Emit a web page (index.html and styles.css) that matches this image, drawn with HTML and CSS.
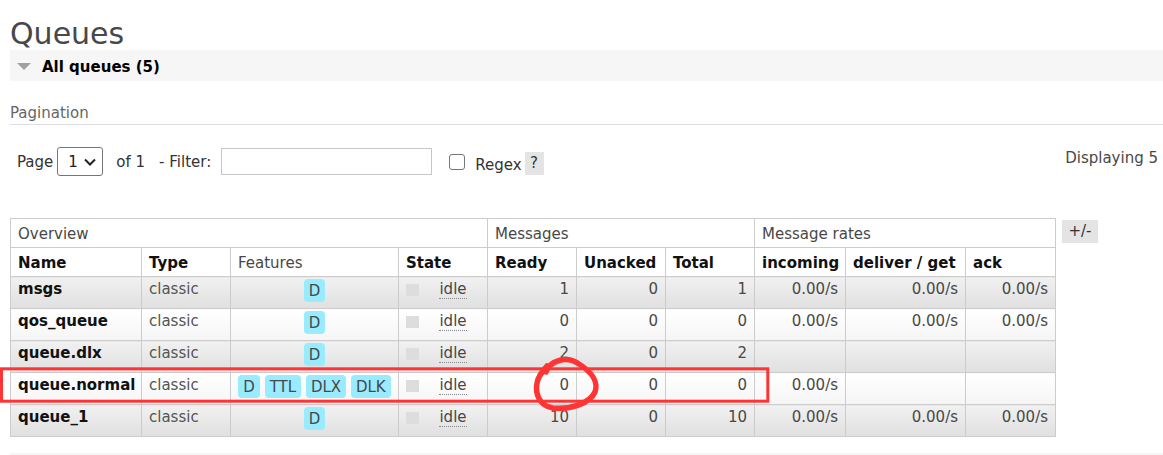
FILE: index.html
```html
<!DOCTYPE html>
<html>
<head>
<meta charset="utf-8">
<title>Queues</title>
<link rel="stylesheet" href="styles.css">
</head>
<body>
<h1 class="title">Queues</h1>
<div class="section-head"><span class="tri"></span><span class="section-title">All queues (5)</span></div>
<div class="pagination-label">Pagination</div>
<div class="pager">
  <span class="lbl lbl-page">Page</span>
  <div class="select"><span class="select-val">1</span><svg class="chev" width="12" height="8" viewBox="0 0 12 8"><path d="M1 1.5 L6 6.5 L11 1.5" fill="none" stroke="#222" stroke-width="2"/></svg></div>
  <span class="lbl lbl-of">of 1</span>
  <span class="lbl lbl-filter">- Filter:</span>
  <input class="filter" type="text">
  <input class="check" type="checkbox">
  <span class="lbl lbl-regex">Regex</span>
  <span class="help">?</span>
  <div class="displaying">Displaying 5</div>
</div>
<div class="table-wrap">
  <table class="list">
    <colgroup>
      <col class="c-name"><col class="c-type"><col class="c-feat"><col class="c-state">
      <col class="c-num"><col class="c-num"><col class="c-num">
      <col class="c-inc"><col class="c-del"><col class="c-ack">
    </colgroup>
    <thead>
      <tr class="group-row">
        <th colspan="4">Overview</th>
        <th colspan="3">Messages</th>
        <th colspan="3">Message rates</th>
      </tr>
      <tr class="col-row">
        <th>Name</th><th>Type</th><th class="thin">Features</th><th>State</th>
        <th>Ready</th><th>Unacked</th><th>Total</th>
        <th>incoming</th><th>deliver / get</th><th>ack</th>
      </tr>
    </thead>
    <tbody>
      <tr class="alt1">
        <td class="name">msgs</td><td class="type">classic</td>
        <td class="feat"><span class="badge">D</span></td>
        <td><div class="state"><span class="key"></span><span class="st"><span class="idle">idle</span></span></div></td>
        <td class="num">1</td><td class="num">0</td><td class="num">1</td>
        <td class="num">0.00/s</td><td class="num">0.00/s</td><td class="num">0.00/s</td>
      </tr>
      <tr class="alt2">
        <td class="name">qos_queue</td><td class="type">classic</td>
        <td class="feat"><span class="badge">D</span></td>
        <td><div class="state"><span class="key"></span><span class="st"><span class="idle">idle</span></span></div></td>
        <td class="num">0</td><td class="num">0</td><td class="num">0</td>
        <td class="num">0.00/s</td><td class="num">0.00/s</td><td class="num">0.00/s</td>
      </tr>
      <tr class="alt1">
        <td class="name">queue.dlx</td><td class="type">classic</td>
        <td class="feat"><span class="badge">D</span></td>
        <td><div class="state"><span class="key"></span><span class="st"><span class="idle">idle</span></span></div></td>
        <td class="num">2</td><td class="num">0</td><td class="num">2</td>
        <td class="num"></td><td class="num"></td><td class="num"></td>
      </tr>
      <tr class="alt2">
        <td class="name">queue.normal</td><td class="type">classic</td>
        <td class="feat"><span class="badge">D</span> <span class="badge">TTL</span> <span class="badge">DLX</span> <span class="badge">DLK</span></td>
        <td><div class="state"><span class="key"></span><span class="st"><span class="idle">idle</span></span></div></td>
        <td class="num">0</td><td class="num">0</td><td class="num">0</td>
        <td class="num">0.00/s</td><td class="num"></td><td class="num"></td>
      </tr>
      <tr class="alt1">
        <td class="name">queue_1</td><td class="type">classic</td>
        <td class="feat"><span class="badge">D</span></td>
        <td><div class="state"><span class="key"></span><span class="st"><span class="idle">idle</span></span></div></td>
        <td class="num">10</td><td class="num">0</td><td class="num">10</td>
        <td class="num">0.00/s</td><td class="num">0.00/s</td><td class="num">0.00/s</td>
      </tr>
    </tbody>
  </table>
  <span class="toggle">+/-</span>
</div>
<div class="next-section"></div>
<svg class="annot" width="1163" height="455" viewBox="0 0 1163 455">
  <rect x="1.5" y="368.8" width="766.3" height="32.4" fill="none" stroke="#ff3535" stroke-width="3"/>
  <path d="M546 372 C550 361, 566 355, 579 364 C590 371, 599 381, 595 392 C590 403, 571 410, 553 408 C539 406, 535 393, 537 383 C538 377, 541 373, 547 366" fill="none" stroke="#ff3535" stroke-width="5.5" stroke-linecap="round" stroke-linejoin="round"/>
</svg>
</body>
</html>
```
FILE: styles.css
```css
html, body {
  margin: 0;
  overflow: hidden;
}

body {
  position: relative;
  width: 1163px;
  height: 455px;
  box-sizing: border-box;
  padding-left: 10px;
  font-family: "DejaVu Sans", Verdana, sans-serif;
  font-size: 15px;
  color: #484848;
  background: #fff;
}

.title {
  margin: 17px 0 0;
  font-size: 30px;
  line-height: 33px;
  font-weight: normal;
  color: #484848;
}

.section-head {
  display: flex;
  align-items: center;
  height: 31px;
  padding-left: 7px;
  background: #f6f6f6;
}

.tri {
  width: 0;
  height: 0;
  border-left: 7px solid transparent;
  border-right: 7px solid transparent;
  border-top: 7px solid #a0a0a0;
  margin-top: 2px;
}

.section-title {
  margin-left: 11px;
  padding-top: 3px;
  font-weight: bold;
  color: #000;
  line-height: 28px;
}

.pagination-label {
  margin-top: 22px;
  line-height: 21px;
  color: #666;
  border-bottom: 1px solid #ddd;
}

.pager {
  display: flex;
  align-items: flex-start;
  height: 29px;
  margin-top: 22px;
  padding-left: 7px;
  white-space: nowrap;
}

.lbl {
  line-height: 20px;
  margin-top: 5px;
  color: #333;
}

.select {
  display: flex;
  align-items: center;
  box-sizing: border-box;
  width: 46px;
  height: 29px;
  margin-left: 4px;
  padding-left: 10px;
  border: 1px solid #767676;
  border-radius: 3px;
  color: #222;
}

.chev {
  margin-left: 6px;
  margin-top: 1px;
}

.lbl-of { margin-left: 13px; }
.lbl-filter { margin-left: 14px; }

.filter {
  box-sizing: border-box;
  width: 211px;
  height: 27px;
  margin: 1px 0 0 10px;
  padding: 0 4px;
  border: 1px solid #c6c6c6;
  border-radius: 0;
  outline: none;
  font: inherit;
}

.check {
  appearance: none;
  -webkit-appearance: none;
  box-sizing: border-box;
  width: 16px;
  height: 16px;
  margin: 7px 0 0 17px;
  border: 1px solid #767676;
  border-radius: 3px;
  background: #fff;
}

.lbl-regex {
  margin-left: 10px;
  margin-top: 8px;
}

.help {
  width: 19px;
  height: 23px;
  margin: 5px 0 0 3px;
  line-height: 23px;
  text-align: center;
  background: #e4e4e4;
  color: #333;
}

.displaying {
  margin-left: auto;
  margin-right: 5px;
  margin-top: 1px;
  line-height: 20px;
  color: #484848;
}

.table-wrap {
  display: flex;
  align-items: flex-start;
  margin-top: 42px;
}

.list {
  border-collapse: collapse;
  table-layout: fixed;
  width: 1045px;
}

.c-name { width: 131px; }
.c-type { width: 89px; }
.c-feat { width: 168px; }
.c-state { width: 89px; }
.c-num { width: 89px; }
.c-inc { width: 91px; }
.c-del { width: 120px; }
.c-ack { width: 90px; }

.list th,
.list td {
  border: 1px solid #ccc;
  white-space: nowrap;
  overflow: hidden;
}

.list th {
  height: 20px;
  padding: 5px 7px 3px;
  line-height: 20px;
  text-align: left;
  background: #fff;
}

.group-row th {
  font-weight: normal;
  color: #484848;
}

.col-row th {
  font-weight: bold;
  color: #111;
}

.col-row th.thin {
  font-weight: normal;
  color: #484848;
}

.list td {
  height: 23px;
  padding: 2px 7px 6px;
  line-height: 20px;
  vertical-align: top;
}

.alt1 td { background: linear-gradient(to bottom, #f1f1f1, #e0e0e0); }
.alt2 td { background: linear-gradient(to bottom, #ffffff, #f5f5f5); }

.name {
  font-weight: bold;
  color: #111;
}

.type { color: #555; }

.feat { text-align: center; }

.badge {
  display: inline-block;
  vertical-align: top;
  height: 23px;
  box-sizing: border-box;
  padding: 2px 5px 0;
  line-height: 21px;
  border-radius: 4px;
  background: #99ebff;
  color: #484848;
}

.state {
  display: flex;
  align-items: flex-start;
}

.key {
  width: 13px;
  height: 12px;
  margin-top: 5px;
  background: #ddd;
  flex: none;
}

.st {
  flex: 1;
  margin-left: 7px;
  text-align: center;
}

.idle {
  border-bottom: 1px dotted #8a8a8a;
}

.num {
  text-align: right;
  color: #484848;
}

.toggle {
  width: 36px;
  height: 23px;
  margin: 2px 0 0 6px;
  line-height: 23px;
  text-align: center;
  background: #e4e4e4;
  color: #333;
}

.next-section {
  height: 20px;
  margin-top: 16px;
  background: #f6f6f6;
}

.annot {
  position: absolute;
  left: 0;
  top: 0;
  pointer-events: none;
}
```
